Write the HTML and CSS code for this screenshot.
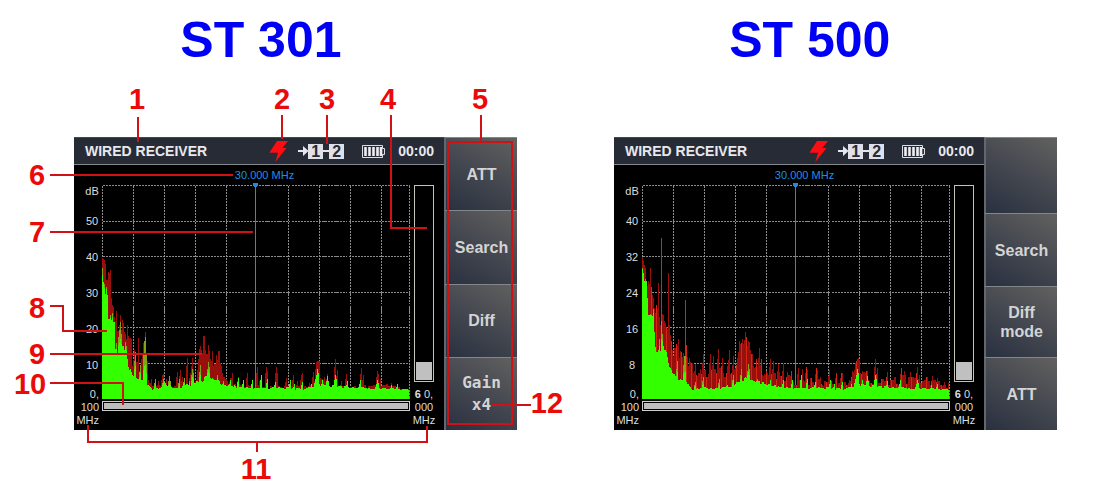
FILE: index.html
```html
<!DOCTYPE html>
<html lang="en">
<head>
<meta charset="utf-8">
<title>ST 301 / ST 500 wired receiver</title>
<link rel="stylesheet" href="styles.css">
</head>
<body>
<svg class="defs" aria-hidden="true">
  <symbol id="bolt" viewBox="0 0 19 21"><path d="M8 0H19L13.300 7H17.600L6.400 21L9 11.800H0.300Z" fill="#fb0d12"/></symbol>
  <symbol id="arrow" viewBox="0 0 10 16"><path d="M0 7H5V3L10.500 8L5 13V9H0Z" fill="#e6e6ee"/></symbol>
  <symbol id="battery" viewBox="0 0 23 13">
    <path d="M0.500 0.500H20.500V3.500H22.500V9.500H20.500V12.500H0.500Z" fill="none" stroke="#dcdce2"/>
    <path d="M3.500 2V11M7.500 2V11M11.500 2V11M15.500 2V11M19 2V11" stroke="#eeeef2" stroke-width="2.600"/>
  </symbol>
</svg>

<main class="page">
  <section class="unit unit-301">
    <h2 class="unit-title">ST 301</h2>
    <div class="device">
      <div class="screen">
        <header class="status">
          <h3 class="status-title">WIRED RECEIVER</h3>
          <svg class="icon-bolt"><use href="#bolt"/></svg>
          <div class="route"><svg class="icon-arrow"><use href="#arrow"/></svg><b>1</b><i></i><b>2</b></div>
          <svg class="icon-battery"><use href="#battery"/></svg>
          <time class="clock">00:00</time>
        </header>
        <div class="display">
          <div class="frequency">30.000 MHz</div>
          <div class="axis">
            <span>dB</span><span>50</span><span>40</span><span>30</span><span>20</span><span>10</span>
            <span class="edge">0,</span><span class="edge">100</span><span class="edge">MHz</span>
          </div>
          <svg class="plot" data-model="301" viewBox="0 0 308 214" preserveAspectRatio="none"></svg>
          <div class="span-bar"><div class="span-fill"></div></div>
          <div class="side">
            <div class="level"><div class="level-fill"></div></div>
            <span><b>6</b> 0,</span><span>000</span><span>MHz</span>
          </div>
        </div>
      </div>
      <nav class="menu">
        <button type="button">ATT</button>
        <button type="button">Search</button>
        <button type="button">Diff</button>
        <button type="button" class="mono">Gain<br>x4</button>
      </nav>
      <svg class="callouts" viewBox="0 0 443 293">
        <path class="leader" d="M64 -20V5M208 -22V2M253 -22V7M317 -22V91H353M407 -22V5M374 5H438V287H374ZM-24 38H159M-24 95H179M-24 169H-11V194H33M-24 217H128M-24 246H49V268M14 288V305H353V289M183 305V315M417 268H457"/>
        <g class="callout-number">
          <text x="63" y="-28">1</text><text x="208" y="-28">2</text><text x="253" y="-28">3</text>
          <text x="314" y="-28">4</text><text x="406" y="-28">5</text><text x="-37" y="48">6</text>
          <text x="-37" y="105">7</text><text x="-37" y="181">8</text><text x="-37" y="227">9</text>
          <text x="-44" y="257">10</text><text x="182" y="342">11</text><text x="473" y="276">12</text>
        </g>
      </svg>
    </div>
  </section>

  <section class="unit unit-500">
    <h2 class="unit-title">ST 500</h2>
    <div class="device">
      <div class="screen">
        <header class="status">
          <h3 class="status-title">WIRED RECEIVER</h3>
          <svg class="icon-bolt"><use href="#bolt"/></svg>
          <div class="route"><svg class="icon-arrow"><use href="#arrow"/></svg><b>1</b><i></i><b>2</b></div>
          <svg class="icon-battery"><use href="#battery"/></svg>
          <time class="clock">00:00</time>
        </header>
        <div class="display">
          <div class="frequency">30.000 MHz</div>
          <div class="axis">
            <span>dB</span><span>40</span><span>32</span><span>24</span><span>16</span><span>8</span>
            <span class="edge">0,</span><span class="edge">100</span><span class="edge">MHz</span>
          </div>
          <svg class="plot" data-model="500" viewBox="0 0 308 214" preserveAspectRatio="none"></svg>
          <div class="span-bar"><div class="span-fill"></div></div>
          <div class="side">
            <div class="level"><div class="level-fill"></div></div>
            <span><b>6</b> 0,</span><span>000</span><span>MHz</span>
          </div>
        </div>
      </div>
      <nav class="menu">
        <button type="button" aria-label="Unassigned"></button>
        <button type="button">Search</button>
        <button type="button">Diff<br>mode</button>
        <button type="button">ATT</button>
      </nav>
    </div>
  </section>
</main>
<script src="plot.js"></script>
</body>
</html>
```

FILE: styles.css
```css
* { box-sizing: border-box; }

body {
  margin: 0;
  background: #fff;
  font-family: "Liberation Sans", Arial, sans-serif;
}

.defs { position: absolute; width: 0; height: 0; }

.page {
  display: grid;
  grid-template-columns: 74fr 443fr 97fr 443fr 37fr;
  min-height: 100vh;
  padding: 12px 0 48px;
}
.unit { min-width: 0; }
.unit-301 { grid-column: 2; }
.unit-500 { grid-column: 4; }

.unit-title {
  margin: 0 0 69px;
  font-size: 50px;
  line-height: 56px;
  color: #0000f5;
}
.unit-301 .unit-title { padding-left: 24%; }
.unit-500 .unit-title { padding-left: 26%; }

.device {
  position: relative;
  display: grid;
  grid-template-columns: 370fr 73fr;
  aspect-ratio: 443 / 293;
}

.screen {
  display: grid;
  grid-template-rows: 28px 1fr;
  background: #000;
}

.status {
  display: flex;
  align-items: center;
  padding: 0 10px 0 11px;
  background: #272b35;
  border-top: 1px solid #454850;
  border-bottom: 1px solid #85888c;
  color: #e8e8ee;
}
.status-title { flex: 1; margin: 0; font-size: 14px; line-height: 16px; white-space: nowrap; }
.icon-bolt { width: 19px; height: 21px; margin-right: 10px; }
.icon-battery { width: 23px; height: 13px; margin-right: 13px; }
.clock { font-size: 14px; line-height: 16px; font-weight: bold; }

.route { display: flex; align-items: center; margin-right: 18px; }
.route b {
  width: 15px;
  background: #e0e0ea;
  color: #272b35;
  font-size: 16px;
  line-height: 15px;
  text-align: center;
}
.route i { width: 6px; height: 2px; background: #e6e6ee; }
.icon-arrow { width: 10px; height: 16px; }

.display {
  display: grid;
  grid-template-columns: 28px 1fr 34px;
  grid-template-rows: 20px 1fr 13px 18px;
  font-size: 11px;
  line-height: 13px;
  color: #dedede;
}

.frequency {
  grid-area: 1 / 2;
  padding: 4px 0 0 17px;
  text-align: center;
  color: #1e8fe6;
}

.axis {
  grid-area: 2 / 1 / 5 / 2;
  display: grid;
  grid-template-rows: 18px repeat(5, 1fr) 18px 13px 13px;
  align-items: center;
  padding: 0 3px 3px 0;
  text-align: center;
}
.axis span { padding-left: 11px; }
.axis span:first-child { align-self: start; }
.axis .edge { padding: 0; text-align: right; align-self: end; }

.plot {
  grid-area: 2 / 2;
  width: 100%;
  height: 100%;
  min-height: 0;
  overflow: visible;
  shape-rendering: crispEdges;
}
.grid-line { fill: none; stroke: #8c8c8c; stroke-dasharray: 2 1; }
.cursor { fill: #2f86d8; }
.peak { fill: #980f0b; }
.peak-bright { fill: #d42615; }
.live-tip { fill: #84a312; }
.live { fill: #34ff00; }

.span-bar {
  grid-area: 3 / 2;
  height: 10px;
  margin-top: 2px;
  padding: 1px;
  border: 1px solid #cfcfcf;
}
.span-fill { height: 100%; background: #bdbdbd; }

.side {
  grid-area: 2 / 3 / 5 / 4;
  display: flex;
  flex-direction: column;
  padding: 0 8px 3px 2px;
  text-align: center;
  white-space: nowrap;
}
.level {
  flex: 1;
  display: flex;
  align-items: flex-end;
  margin: 0 2px 6px;
  padding: 1px;
  border: 1px solid #c4c4b8;
}
.level-fill { width: 100%; height: 18px; background: #c0c0c0; }

.menu { display: grid; grid-template-rows: repeat(4, 1fr); }
.unit-500 .menu { grid-template-rows: 76fr 73fr 71fr 73fr; }
.menu button {
  min-width: 0;
  padding: 0;
  border: 0;
  border-top: 1px solid #83868a;
  border-left: 2px solid #63676d;
  background: linear-gradient(30deg, #29303f 0%, #41454e 45%, #626160 100%);
  color: #d4d4d4;
  font: bold 16px/19px "Liberation Sans", Arial, sans-serif;
}
.menu .mono { font: bold 16px/22px "DejaVu Sans Mono", monospace; }

.callouts {
  position: absolute;
  inset: 0;
  width: 100%;
  height: 100%;
  overflow: visible;
  pointer-events: none;
}
.leader { fill: none; stroke: #d01214; stroke-width: 2; }
.callout-number { font-size: 29px; font-weight: bold; fill: #ea0a0a; text-anchor: middle; }
```

FILE: plot.js
```js
// Each trace: an envelope of [x, height] points, then spikes.
const tailSpikes = [[141,19],[150,19],[159,24],[165,20],[173,17],[188,19],[192,15],[200,17],[209,15],[213,20],[215,30],[216,26],[220,19],[225,23],[226,18],[232,18],[233,24],[234,20],[245,18],[258,19],[274,15],[275,19],[276,16],[289,14],[295,15]];

const traces = {
  301: {
    live: [[0,118],[2,111],[5,100],[6,76],[12,74],[13,48],[16,48],[24,47],[26,34],[30,24],[40,18],[46,14],[50,10],[58,11],[62,15],[66,11],[76,11],[90,15],[100,18],[106,24],[112,20],[120,14],[136,12],[150,11],[205,10],[216,14],[224,13],[260,11],[307,9]],
    liveSpikes: [[0,131],[1,117],[2,115],[4,112],[8,84],[10,86],[14,56],[16,62],[17,69],[18,77],[19,65],[20,52],[23,57],[24,53],[33,47],[38,34],[42,58],[43,62],[44,44],[53,20],[61,20],[67,23],[68,18],[77,20],[82,21],[87,18],[90,30],[91,26],[98,34],[106,37],[107,32],[115,24],[121,18],[128,19],[136,21]].concat(tailSpikes),
    peak: [[0,134],[2,132],[4,124],[8,122],[9,94],[11,90],[14,80],[15,60],[18,78],[22,64],[27,55],[30,36],[34,32],[44,26],[48,14],[70,12],[84,13],[94,18],[97,47],[106,46],[110,36],[116,40],[121,24],[126,14],[155,11],[206,12],[212,20],[218,22],[226,12],[270,12],[280,14],[307,9]],
    ripple: 0.3,
    peakSpikes: [[18,84],[25,74],[28,61],[29,60],[32,49],[36,61],[39,40],[41,56],[43,67],[45,38],[49,20],[56,18],[60,24],[61,25],[64,20],[67,22],[75,27],[78,29],[80,22],[85,41],[88,26],[90,41],[91,30],[97,50],[98,53],[101,63],[102,63],[106,54],[110,48],[114,44],[116,48],[117,48],[120,26],[128,21],[130,26],[136,22],[141,19],[145,26],[155,32],[157,18],[164,32],[165,28],[174,32],[175,26],[184,21],[191,24],[195,18],[199,24],[200,26],[207,16],[211,27],[214,37],[215,38],[216,38],[217,38],[222,22],[225,25],[233,40],[235,29],[239,18],[244,25],[259,31],[261,24],[275,28],[276,25],[278,20],[289,16]]
  },
  500: {
    live: [[0,127],[4,114],[6,80],[11,80],[13,50],[16,48],[24,47],[28,30],[34,20],[44,18],[50,9],[58,11],[70,10],[90,13],[106,22],[114,17],[130,13],[150,11],[205,10],[216,14],[224,13],[260,11],[307,9]],
    liveSpikes: [[0,131],[3,120],[8,85],[11,90],[17,60],[19,78],[20,65],[35,38],[42,43],[43,43],[53,17],[61,22],[77,20],[91,24],[99,30],[106,35],[107,30],[115,20],[128,19]].concat(tailSpikes),
    peak: [[0,135],[3,124],[8,108],[12,96],[15,82],[22,75],[28,66],[31,46],[38,44],[46,32],[56,24],[72,26],[85,21],[94,32],[97,52],[103,57],[108,50],[112,34],[120,29],[126,20],[140,20],[158,17],[190,14],[206,15],[214,33],[220,26],[228,17],[260,18],[280,18],[307,13]],
    ripple: 0.6,
    bright: true,
    peakSpikes: [[8,131],[16,116],[19,161],[26,126],[34,55],[36,60],[41,46],[43,99],[44,54],[47,41],[50,36],[53,35],[58,30],[61,45],[68,45],[71,43],[76,50],[80,41],[85,33],[87,49],[91,43],[97,58],[100,60],[103,67],[104,62],[107,54],[110,45],[114,40],[117,51],[119,40],[128,40],[131,38],[136,35],[141,35],[145,27],[149,28],[156,31],[160,30],[164,32],[165,29],[174,31],[175,29],[178,22],[187,29],[194,26],[199,26],[200,26],[210,28],[213,36],[215,40],[216,41],[217,39],[222,24],[225,28],[233,40],[235,31],[239,20],[245,27],[253,20],[259,31],[262,28],[268,27],[275,32],[277,24],[284,20],[290,23],[295,21],[302,17]]
  }
};

const BASE = 214;

function envelope(points, x) {
  let i = 1;
  while (i < points.length - 1 && points[i][0] < x) i++;
  const [x0, y0] = points[i - 1], [x1, y1] = points[i];
  return y0 + (y1 - y0) * (x - x0) / (x1 - x0);
}

function ripple(x, seed) {
  const s = Math.sin(Math.floor(x / 2) * 12.9898 + seed) * 43758.5453;
  return s - Math.floor(s);
}

function heights(points, spikes, amount, seed) {
  const out = [];
  for (let x = 0; x < 307; x++) {
    const h = envelope(points, x);
    out.push(Math.round(h + (ripple(x, seed) - 0.4) * Math.min(h * amount, 14)));
  }
  spikes.forEach(([x, h]) => {
    out[x] = Math.max(out[x], h);
    // Tall spikes stay one column wide.
    if (x > 0 && h < 60) out[x - 1] = Math.max(out[x - 1], Math.round(h * 0.8));
  });
  return out;
}

function columns(values, keep) {
  return values.map((h, x) => keep && !keep(x) ? '' : `M${x} ${BASE}v${-h}h1v${h}z`).join('');
}

document.querySelectorAll('.plot').forEach(svg => {
  const t = traces[svg.dataset.model];
  let grid = '';
  for (let i = 0; i <= 10; i++) {
    if (i === 5) continue;
    grid += `M${Math.min(i * 31, 307) + 0.5} 0.5V213.5`;
  }
  for (let i = 0; i <= 6; i++) grid += `M0.5 ${Math.round(i * 35.5) + 0.5}H307.5`;

  const solid = heights(t.live, [], 0.2, 1);
  const tips = heights(t.live, t.liveSpikes, 0.2, 1);
  const peak = heights(t.peak, t.peakSpikes, t.ripple, 5);
  // Beyond the falling edge the live spikes stay fully green.
  const live = tips.map((h, x) => x > 125 ? h : Math.round(solid[x] + (h - solid[x]) * 0.4));

  svg.innerHTML =
    `<path class="grid-line" d="${grid}"/>` +
    `<path class="cursor" d="M153 0h1V204h-1zM151 -2H156V0L154 3H153L151 0Z"/>` +
    `<path class="peak" d="${columns(peak)}"/>` +
    (t.bright ? `<path class="peak-bright" d="${columns(peak, x => x % 5 === 4 || x === 43)}"/>` : '') +
    `<path class="live-tip" d="${columns(tips)}"/>` +
    `<path class="live" d="${columns(live)}"/>`;
});
```
